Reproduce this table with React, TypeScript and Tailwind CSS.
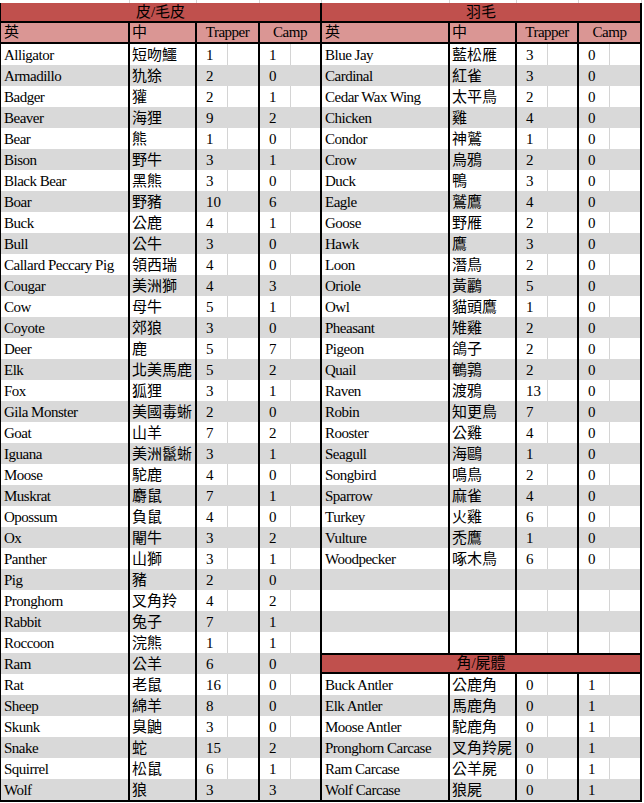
type Item = [string, string, string, string];

const hides: Item[] = [
  ["Alligator", "短吻鱷", "1", "1"],
  ["Armadillo", "犰狳", "2", "0"],
  ["Badger", "獾", "2", "1"],
  ["Beaver", "海狸", "9", "2"],
  ["Bear", "熊", "1", "0"],
  ["Bison", "野牛", "3", "1"],
  ["Black Bear", "黑熊", "3", "0"],
  ["Boar", "野豬", "10", "6"],
  ["Buck", "公鹿", "4", "1"],
  ["Bull", "公牛", "3", "0"],
  ["Callard Peccary Pig", "領西瑞", "4", "0"],
  ["Cougar", "美洲獅", "4", "3"],
  ["Cow", "母牛", "5", "1"],
  ["Coyote", "郊狼", "3", "0"],
  ["Deer", "鹿", "5", "7"],
  ["Elk", "北美馬鹿", "5", "2"],
  ["Fox", "狐狸", "3", "1"],
  ["Gila Monster", "美國毒蜥", "2", "0"],
  ["Goat", "山羊", "7", "2"],
  ["Iguana", "美洲鬣蜥", "3", "1"],
  ["Moose", "駝鹿", "4", "0"],
  ["Muskrat", "麝鼠", "7", "1"],
  ["Opossum", "負鼠", "4", "0"],
  ["Ox", "閹牛", "3", "2"],
  ["Panther", "山獅", "3", "1"],
  ["Pig", "豬", "2", "0"],
  ["Pronghorn", "叉角羚", "4", "2"],
  ["Rabbit", "兔子", "7", "1"],
  ["Roccoon", "浣熊", "1", "1"],
  ["Ram", "公羊", "6", "0"],
  ["Rat", "老鼠", "16", "0"],
  ["Sheep", "綿羊", "8", "0"],
  ["Skunk", "臭鼬", "3", "0"],
  ["Snake", "蛇", "15", "2"],
  ["Squirrel", "松鼠", "6", "1"],
  ["Wolf", "狼", "3", "3"],
];

const feathers: Item[] = [
  ["Blue Jay", "藍松雁", "3", "0"],
  ["Cardinal", "紅雀", "3", "0"],
  ["Cedar Wax Wing", "太平鳥", "2", "0"],
  ["Chicken", "雞", "4", "0"],
  ["Condor", "神鷲", "1", "0"],
  ["Crow", "烏鴉", "2", "0"],
  ["Duck", "鴨", "3", "0"],
  ["Eagle", "鷲鷹", "4", "0"],
  ["Goose", "野雁", "2", "0"],
  ["Hawk", "鷹", "3", "0"],
  ["Loon", "潛鳥", "2", "0"],
  ["Oriole", "黃鸝", "5", "0"],
  ["Owl", "貓頭鷹", "1", "0"],
  ["Pheasant", "雉雞", "2", "0"],
  ["Pigeon", "鴿子", "2", "0"],
  ["Quail", "鵪鶉", "2", "0"],
  ["Raven", "渡鴉", "13", "0"],
  ["Robin", "知更鳥", "7", "0"],
  ["Rooster", "公雞", "4", "0"],
  ["Seagull", "海鷗", "1", "0"],
  ["Songbird", "鳴鳥", "2", "0"],
  ["Sparrow", "麻雀", "4", "0"],
  ["Turkey", "火雞", "6", "0"],
  ["Vulture", "禿鷹", "1", "0"],
  ["Woodpecker", "啄木鳥", "6", "0"],
];

const antlers: Item[] = [
  ["Buck Antler", "公鹿角", "0", "1"],
  ["Elk Antler", "馬鹿角", "0", "1"],
  ["Moose Antler", "駝鹿角", "0", "1"],
  ["Pronghorn Carcase", "叉角羚屍", "0", "1"],
  ["Ram Carcase", "公羊屍", "0", "1"],
  ["Wolf Carcase", "狼屍", "0", "1"],
];

type Cols = { en: string; zh: string; tr: string; camp: string };

const leftCols: Cols = { en: "w-[129px]", zh: "w-[67px]", tr: "w-[63px]", camp: "w-[62px]" };
const rightCols: Cols = { en: "w-[128px]", zh: "w-[67px]", tr: "w-[62px]", camp: "w-[63px]" };

const cell = "h-full shrink-0 border-r-2 border-black flex items-center";

function NumCell({ value, width, striped }: { value: string; width: string; striped: boolean }) {
  return (
    <div className={`${cell} ${width}`}>
      <div
        className={`h-full w-[31px] shrink-0 border-r flex items-center pl-[9px] pt-[2px] ${
          striped ? "border-transparent" : "border-[#d4d4d4]"
        }`}
      >
        {value}
      </div>
    </div>
  );
}

function DataRow({ item, index, cols }: { item: Item | null; index: number; cols: Cols }) {
  const striped = index % 2 === 1;
  return (
    <div className={`flex h-[21px] text-[15px] ${striped ? "bg-[#d9d9d9]" : "bg-white"}`}>
      <div className={`${cell} ${cols.en} pl-[3px] pt-[2px] tracking-[-0.5px] whitespace-nowrap`}>{item?.[0]}</div>
      <div className={`${cell} ${cols.zh} pl-[2px] pt-[2px] whitespace-nowrap`}>{item?.[1]}</div>
      <NumCell value={item?.[2] ?? ""} width={cols.tr} striped={striped} />
      <NumCell value={item?.[3] ?? ""} width={cols.camp} striped={striped} />
    </div>
  );
}

function HeadRow({ cols }: { cols: Cols }) {
  return (
    <div className="flex h-[21px] bg-[#da9694] border-b-2 border-black text-[15px]">
      <div className={`${cell} ${cols.en} pl-[3px]`}>英</div>
      <div className={`${cell} ${cols.zh} pl-[2px]`}>中</div>
      <div className={`${cell} ${cols.tr} justify-center tracking-[-0.5px]`}>Trapper</div>
      <div className={`${cell} ${cols.camp} justify-center tracking-[-0.5px]`}>Camp</div>
    </div>
  );
}

function TitleRow({ title, className }: { title: string; className: string }) {
  return (
    <div
      className={`flex items-center justify-center bg-[#c0504d] border-r-2 border-black text-[15px] ${className}`}
    >
      {title}
    </div>
  );
}

function TopStrip({ cols }: { cols: Cols }) {
  const line = "h-full shrink-0 border-r border-[#d4d4d4]";
  return (
    <div className="flex h-[3px]">
      <div className={`${line} ${cols.en}`} />
      <div className={`${line} ${cols.zh}`} />
      <div className={`${line} ${cols.tr}`} />
      <div className={`${line} ${cols.camp}`} />
    </div>
  );
}

export default function App() {
  const birdRows: (Item | null)[] = [...feathers, null, null, null, null];

  return (
    <div className="w-[644px] h-[803px] bg-white text-black text-[14px] leading-none font-['Liberation_Serif','Noto_Sans_CJK_TC',serif] overflow-hidden">
      <div className="flex pl-px">
        <TopStrip cols={leftCols} />
        <TopStrip cols={rightCols} />
      </div>
      <div className="flex w-[642px] border-l border-b-2 border-black">
        {/* 皮/毛皮 */}
        <div className="flex flex-col w-[321px]">
          <TitleRow title="皮/毛皮" className="h-[20px] border-b-2" />
          <HeadRow cols={leftCols} />
          {hides.map((item, i) => (
            <DataRow key={item[0]} item={item} index={i} cols={leftCols} />
          ))}
        </div>

        {/* 羽毛 + 角/屍體 */}
        <div className="flex flex-col w-[320px]">
          <TitleRow title="羽毛" className="h-[20px] border-b-2" />
          <HeadRow cols={rightCols} />
          {birdRows.map((item, i) => (
            <DataRow key={`b${i}`} item={item} index={i} cols={rightCols} />
          ))}
          <TitleRow title="角/屍體" className="h-[21px] border-y-2" />
          {antlers.map((item, i) => (
            <DataRow key={item[0]} item={item} index={i} cols={rightCols} />
          ))}
        </div>
      </div>
    </div>
  );
}
